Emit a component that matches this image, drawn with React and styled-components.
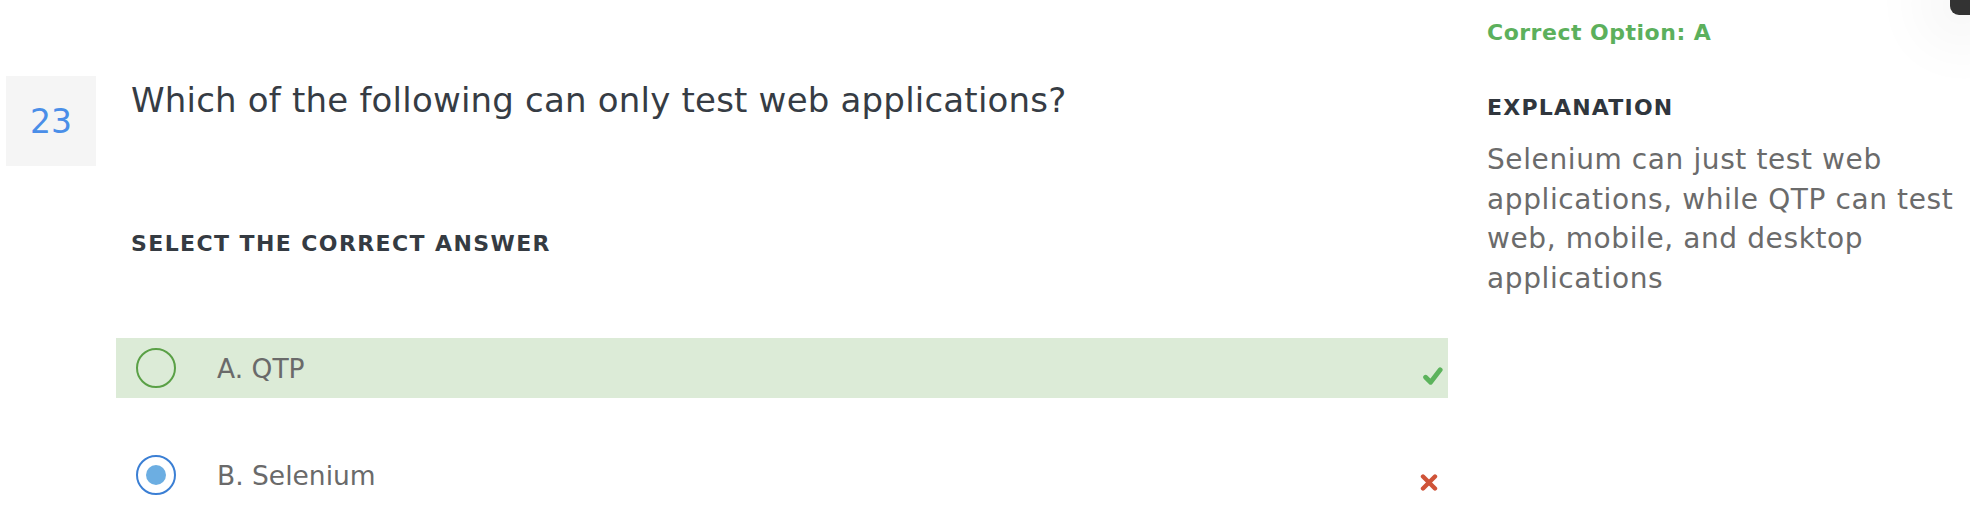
import React from "react";
import styled, { createGlobalStyle } from "styled-components";

const GlobalStyle = createGlobalStyle`
  body {
    margin: 0;
    background: #ffffff;
    font-family: "DejaVu Sans", "Liberation Sans", sans-serif;
  }
`;

const Page = styled.div`
  position: relative;
  display: flex;
  align-items: flex-start;
  width: 1970px;
  height: 524px;
  overflow: hidden;
  background: #ffffff;
`;

const Main = styled.div`
  flex: none;
  width: 1442px;
  padding-left: 6px;
`;

const QuestionHead = styled.div`
  display: flex;
  align-items: flex-start;
  margin-top: 76px;
`;

const NumberBox = styled.div`
  flex: none;
  width: 90px;
  height: 90px;
  display: flex;
  align-items: center;
  justify-content: center;
  background: #f5f5f5;
  color: #4a8ee8;
  font-size: 33px;
`;

const QuestionText = styled.h2`
  margin: 4px 0 0 35px;
  font-size: 34px;
  font-weight: 400;
  line-height: 1.2;
  letter-spacing: 0.2px;
  color: #363c44;
`;

const SectionLabel = styled.h3`
  margin: 65px 0 0 125px;
  font-size: 22px;
  font-weight: 700;
  color: #353b42;
  letter-spacing: 1.4px;
`;

const OptionList = styled.div`
  display: flex;
  flex-direction: column;
  gap: 47px;
  margin: 82px 0 0 110px;
  width: 1332px;
`;

const OptionRow = styled.div`
  display: flex;
  align-items: center;
  height: 60px;
  padding-left: 20px;
  background: ${(p) => (p.$correct ? "#dcebd7" : "transparent")};
`;

const Radio = styled.span`
  flex: none;
  box-sizing: border-box;
  width: 40px;
  height: 40px;
  border-radius: 50%;
  border: 2px solid ${(p) => (p.$selected ? "#3b7fd4" : "#5aa046")};
  display: flex;
  align-items: center;
  justify-content: center;

  &::after {
    content: "";
    display: ${(p) => (p.$selected ? "block" : "none")};
    width: 20px;
    height: 20px;
    border-radius: 50%;
    background: #6caee2;
  }
`;

const OptionLabel = styled.span`
  margin-left: 41px;
  font-size: 26.5px;
  color: #6a6a6a;
`;

const Mark = styled.span`
  margin-left: auto;
  display: flex;
  color: ${(p) => (p.$ok ? "#5cb35c" : "#cf5338")};
  margin-top: ${(p) => (p.$ok ? "16px" : "15px")};
  margin-right: ${(p) => (p.$ok ? "5px" : "10px")};
`;

const Aside = styled.aside`
  flex: none;
  width: 482px;
  margin-left: 39px;
`;

const CorrectOption = styled.div`
  margin-top: 20px;
  font-size: 22px;
  font-weight: 700;
  color: #5cb05c;
  letter-spacing: 0.5px;
`;

const ExplainTitle = styled.div`
  margin-top: 50px;
  font-size: 22px;
  font-weight: 700;
  color: #30363d;
  letter-spacing: 1.2px;
`;

const ExplainText = styled.p`
  margin: 20px 0 0;
  font-size: 28px;
  line-height: 39.5px;
  letter-spacing: 0.6px;
  color: #6b6b6b;
`;

const CornerTab = styled.div`
  position: absolute;
  top: 0;
  right: 0;
  width: 20px;
  height: 15px;
  background: #333333;
  border-bottom-left-radius: 9px;
  box-shadow: 0 0 60px 30px rgba(0, 0, 0, 0.04);
`;

const CheckIcon = () => (
  <svg width="20" height="18" viewBox="0 0 20 18" fill="none">
    <path
      d="M2.6 10.2 L7.6 15.2 L17.2 2.8"
      stroke="currentColor"
      strokeWidth="4.8"
      strokeLinecap="round"
      strokeLinejoin="round"
    />
  </svg>
);

const CrossIcon = () => (
  <svg width="18" height="17" viewBox="0 0 18 17" fill="none">
    <path
      d="M3 2.5 L15 14.5 M15 2.5 L3 14.5"
      stroke="currentColor"
      strokeWidth="4.4"
      strokeLinecap="round"
    />
  </svg>
);

const options = [
  { key: "A", text: "QTP", correct: true, selected: false },
  { key: "B", text: "Selenium", correct: false, selected: true },
];

export default function App() {
  return (
    <>
      <GlobalStyle />
      <Page>
        <Main>
          <QuestionHead>
            <NumberBox>23</NumberBox>
            <QuestionText>Which of the following can only test web applications?</QuestionText>
          </QuestionHead>
          <SectionLabel>SELECT THE CORRECT ANSWER</SectionLabel>
          <OptionList>
            {options.map((o) => (
              <OptionRow key={o.key} $correct={o.correct}>
                <Radio $selected={o.selected} />
                <OptionLabel>
                  {o.key}. {o.text}
                </OptionLabel>
                <Mark $ok={o.correct}>{o.correct ? <CheckIcon /> : <CrossIcon />}</Mark>
              </OptionRow>
            ))}
          </OptionList>
        </Main>
        <Aside>
          <CorrectOption>Correct Option: A</CorrectOption>
          <ExplainTitle>EXPLANATION</ExplainTitle>
          <ExplainText>
            Selenium can just test web applications, while QTP can test web, mobile, and desktop
            applications
          </ExplainText>
        </Aside>
        <CornerTab />
      </Page>
    </>
  );
}
